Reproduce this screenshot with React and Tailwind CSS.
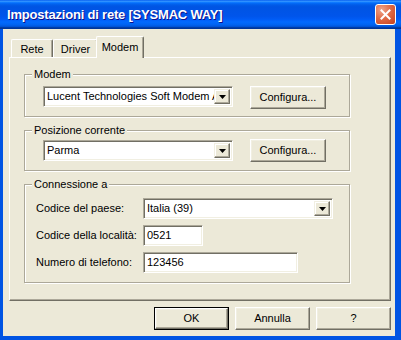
const ui = { fontFamily: '"Liberation Sans", Arial, sans-serif' }

function Raised({ className = '', children, isDefault = false }) {
  const face = (
    <div className="flex h-full w-full items-center justify-center border border-t-white border-l-white border-r-[#716F64] border-b-[#716F64] bg-[#ECE9D8] shadow-[inset_-1px_-1px_0_#ACA899,inset_1px_1px_0_#F1EFE2] text-[11px] text-black">
      {children}
    </div>
  )
  if (isDefault) {
    return <div className={`border border-black ${className}`}>{face}</div>
  }
  return <div className={className}>{face}</div>
}

function Arrow() {
  return (
    <svg width="7" height="4" viewBox="0 0 7 4">
      <path d="M0 0h7L3.5 4z" fill="#000" />
    </svg>
  )
}

function Combo({ value, className = '' }) {
  return (
    <div className={`flex border border-t-[#ACA899] border-l-[#ACA899] border-r-white border-b-white bg-white shadow-[inset_1px_1px_0_#716F64,inset_-1px_-1px_0_#F1EFE2] p-[2px] ${className}`}>
      <div className="flex-1 overflow-hidden whitespace-nowrap pl-[1px] text-[11px] leading-[15px] text-black">{value}</div>
      <div className="flex w-[16px] items-center justify-center border border-t-[#F1EFE2] border-l-[#F1EFE2] border-r-[#716F64] border-b-[#716F64] bg-[#ECE9D8] shadow-[inset_-1px_-1px_0_#ACA899,inset_1px_1px_0_white]">
        <Arrow />
      </div>
    </div>
  )
}

function Field({ value, className = '' }) {
  return (
    <div className={`border border-t-[#ACA899] border-l-[#ACA899] border-r-white border-b-white bg-white shadow-[inset_1px_1px_0_#716F64,inset_-1px_-1px_0_#F1EFE2] px-[3px] pt-[3px] text-[11px] leading-[13px] text-black ${className}`}>
      {value}
    </div>
  )
}

function Group({ label, className = '', children }) {
  return (
    <div className={`relative w-[326px] border border-[#ACA899] shadow-[1px_1px_0_white,inset_1px_1px_0_white] ${className}`}>
      <span className="absolute -top-[7px] left-[7px] bg-[#ECE9D8] px-[2px] text-[11px] leading-[13px] text-black">{label}</span>
      {children}
    </div>
  )
}

function Tab({ label, selected = false, className = '' }) {
  if (selected) {
    return (
      <div className={`relative z-10 -mx-[2px] -mb-[1px] flex h-[22px] items-start justify-center rounded-t-[2px] border border-b-0 border-t-white border-l-white border-r-[#716F64] bg-[#ECE9D8] pt-[4px] text-[11px] leading-[13px] shadow-[inset_-1px_0_0_#ACA899] ${className}`}>
        {label}
      </div>
    )
  }
  return (
    <div className={`flex h-[18px] items-start justify-center rounded-t-[2px] border border-b-0 border-t-white border-l-white border-r-[#716F64] bg-[#ECE9D8] pt-[3px] text-[11px] leading-[13px] shadow-[inset_-1px_0_0_#ACA899] ${className}`}>
      {label}
    </div>
  )
}

export default function App() {
  return (
    <div className="flex h-[340px] w-[401px] flex-col bg-[#0054E3]" style={ui}>
      <div className="flex h-[29px] items-center justify-between bg-[linear-gradient(to_bottom,#0058EE_0%,#3593FF_4%,#288EFF_6%,#127DFF_8%,#036FFC_10%,#0262EE_14%,#0057E5_20%,#0054E3_24%,#0055EB_56%,#005BF5_66%,#026AFE_76%,#0062EF_86%,#0052D6_92%,#0040AB_94%,#003092_100%)] pl-[7px] pr-[5px]">
        <span className="text-[13px] font-bold tracking-[-0.2px] text-white [text-shadow:1px_1px_#0F1089]">Impostazioni di rete [SYSMAC WAY]</span>
        <div className="flex h-[21px] w-[21px] items-center justify-center rounded-[3px] border border-white bg-[radial-gradient(circle_at_30%_25%,#EFA58C_0%,#E06B47_45%,#C8401C_100%)]">
          <svg width="11" height="11" viewBox="0 0 11 11">
            <path d="M1.5 1.5l8 8M9.5 1.5l-8 8" stroke="#fff" strokeWidth="2" strokeLinecap="square" />
          </svg>
        </div>
      </div>

      <div className="mb-[4px] ml-[3px] mr-[6px] flex flex-1 flex-col bg-[#ECE9D8] pl-[6px] pr-[4px] pt-[7px] text-black">
        <div className="flex h-[21px] items-end pl-[2px]">
          <Tab label="Rete" className="w-[42px]" />
          <Tab label="Driver" className="w-[45px]" />
          <Tab label="Modem" selected className="w-[48px]" />
        </div>

        <div className="flex h-[244px] flex-col border border-t-white border-l-white border-r-[#716F64] border-b-[#716F64] pl-[14px] pt-[16px] shadow-[inset_-1px_-1px_0_#ACA899]">
          <Group label="Modem" className="h-[43px]">
            <div className="flex items-start pl-[18px] pt-[11px]">
              <Combo value="Lucent Technologies Soft Modem AMR" className="h-[21px] w-[190px]" />
              <Raised className="ml-[17px] h-[23px] w-[76px]">Configura...</Raised>
            </div>
          </Group>

          <Group label="Posizione corrente" className="mt-[13px] h-[41px]">
            <div className="flex items-start pl-[18px] pt-[8px]">
              <Combo value="Parma" className="mt-[1px] h-[21px] w-[190px]" />
              <Raised className="ml-[17px] h-[23px] w-[76px]">Configura...</Raised>
            </div>
          </Group>

          <Group label="Connessione a" className="mt-[13px] h-[99px]">
            <div className="flex flex-col gap-[6px] pl-[11px] pt-[13px]">
              <div className="flex items-center">
                <span className="w-[107px] text-[11px]">Codice del paese:</span>
                <Combo value="Italia (39)" className="h-[21px] w-[190px]" />
              </div>
              <div className="flex items-center">
                <span className="w-[107px] text-[11px]">Codice della località:</span>
                <Field value="0521" className="h-[21px] w-[60px]" />
              </div>
              <div className="flex items-center">
                <span className="w-[107px] text-[11px]">Numero di telefono:</span>
                <Field value="123456" className="h-[21px] w-[155px]" />
              </div>
            </div>
          </Group>
        </div>

        <div className="mt-[6px] flex justify-end gap-[6px]">
          <Raised isDefault className="h-[23px] w-[75px]">OK</Raised>
          <Raised className="h-[23px] w-[75px]">Annulla</Raised>
          <Raised className="h-[23px] w-[75px]">?</Raised>
        </div>
      </div>
    </div>
  )
}
